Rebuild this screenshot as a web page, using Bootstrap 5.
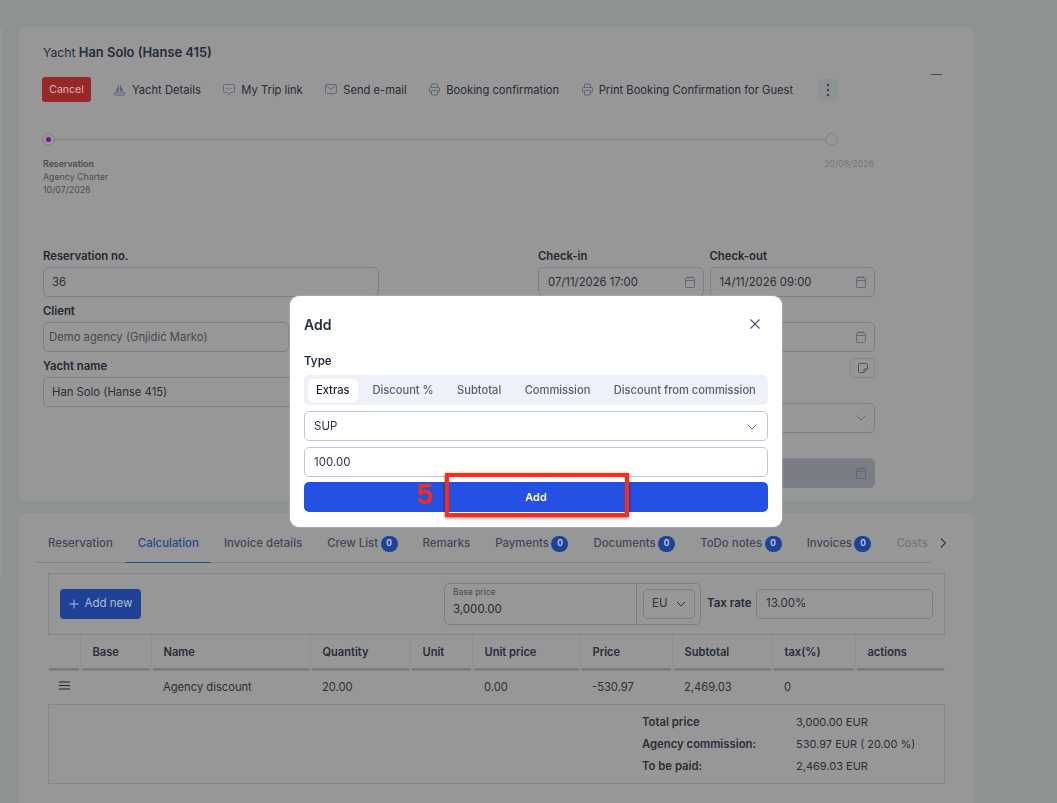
<!DOCTYPE html>
<html lang="en">

<head>
  <meta charset="UTF-8" />
  <meta name="viewport" content="width=device-width, initial-scale=1" />
  <title>Yacht reservation</title>
  <link href="https://cdn.jsdelivr.net/npm/bootstrap@5.3.3/dist/css/bootstrap.min.css" rel="stylesheet">
  <style>
    html, body { height: 803px; overflow: hidden; }
    body { background: #8d9393; font-family: Inter, "Liberation Sans", sans-serif; font-size: 11.3px; color: #232833; }
    svg { display: block; flex: none; }
    .page-wrap { padding: 27px 83px 0 19px; }
    .panel { background: #979797; border-radius: 7px; }
    .panel-top { height: 474px; padding: 18px 24px 0 23px; margin-bottom: 12px; position: relative; }
    .panel-bottom { height: 300px; padding: 0 29px 0 16px; }
    .yacht-title { font-size: 12.2px; line-height: 16px; margin: 0 0 16px 1px; color: #242a36; }
    .yacht-title b { font-weight: 600; font-size: 12.9px; }
    .collapse-bar { position: absolute; top: 47px; right: 32px; width: 11px; height: 1px; background: #3d4a66; }

    .actions { height: 25px; margin-bottom: 31px; }
    .btn-void { background: #982828; color: #d8b8b8; font-size: 10.5px; width: 49px; height: 25px; padding: 0; border: 0; border-radius: 3px; margin-right: 22px; }
    .act-link { font-size: 11.2px; color: #262b37; margin-right: 22.5px; gap: 6px; white-space: nowrap; padding-top: 1px; }
    .act-link svg { color: #5b6577; }
    .kebab { width: 22px; height: 22px; border-radius: 4px; background: #8d9393; margin-left: 1px; }

    .stepper { position: relative; height: 12px; width: 796px; margin-bottom: 12px; }
    .stepper-line { position: absolute; left: 12px; right: 12px; top: 6px; height: 1px; background: #7f8184; }
    .step-dot { position: absolute; top: 0; width: 13px; height: 13px; border-radius: 50%; border: 1px solid #7f8184; background: #979797; }
    .step-dot.on::after { content: ""; position: absolute; left: 3px; top: 3px; width: 5px; height: 5px; border-radius: 50%; background: #7f0a9f; }
    .step-text { font-size: 8.8px; line-height: 13px; color: #4a4d55; height: 92px; margin-left: 1px; }
    .step-text b { font-weight: 600; }
    .step-end { color: #74777c; margin-left: 782px; }

    .fields { gap: 0 159px; margin-left: 1px; }
    .field-col { width: 336px; flex: none; }
    .field-col.wide { width: 337px; }
    .field-label { font-size: 11.3px; font-weight: 600; line-height: 14px; margin-bottom: 4px; color: #232833; height: 14px; }
    .fake-input { height: 30px; border: 1px solid #7c8087; border-radius: 5px; padding: 0 8px; font-size: 11.3px; color: #2a2e38; display: flex; align-items: center; justify-content: space-between; margin-bottom: 7px; }
    .fake-input svg { color: #5b6577; }
    .field-col.wide .fake-input { padding: 0 8px 0 9px; }
    .client-box { width: 246px; color: #44474e; }
    .field-col .client-box { padding-left: 5px; }
    .date-pair { gap: 6px; }
    .date-pair > div { width: 165.5px; }
    .fake-input.locked { background: #7a7d84; margin-bottom: 0; }
    .note-btn { width: 25px; height: 20px; border: 1px solid #83868b; border-radius: 4px; margin: -1px 0 7px auto; color: #4c5465; }

    .tab-row { height: 60px; position: relative; padding-top: 5px; margin-left: .5px; }
    .tab-strip { width: 895px; box-shadow: inset 0 -1px #7e838a; height: 45px; overflow: hidden; flex-wrap: nowrap; }
    .tab-strip a { padding: 7px 12.5px 0; height: 45px; font-size: 11.42px; font-weight: 500; color: #3e4758; text-decoration: none; white-space: nowrap; display: flex; align-items: center; gap: 2.5px; border-bottom: 1px solid transparent; }
    .tab-strip a.active { color: #26468f; border-bottom-color: #26468f; }
    .tab-strip a.faded { color: #72767e; }
    .count-pill { width: 17px; height: 16px; border-radius: 8px; background: #1f4296; color: #ccd4e6; font-size: 8.5px; font-weight: 600; display: inline-flex; align-items: center; justify-content: center; }
    .tab-next { position: absolute; left: 904px; top: 25px; color: #333a48; }

    .tool-box { margin-left: 13px; width: 897px; height: 62px; border: 1px solid #82858a; display: flex; align-items: center; padding: 0 11px; }
    .btn-add-new { background: #1f4296; color: #b0bcd6; border: 0; border-radius: 4px; width: 81px; height: 30px; font-size: 11.5px; padding: 0; gap: 6px; margin-right: 303px; }
    .base-group { width: 257px; height: 42px; border: 1px solid #7c8087; border-radius: 5px; display: flex; margin-right: 6px; }
    .base-price { width: 192px; padding: 2px 8px; border-right: 1px solid #7c8087; }
    .base-price small { display: block; font-size: 8.5px; line-height: 12px; color: #484c55; }
    .base-price span { display: block; margin-top: 3px; font-size: 11.5px; line-height: 17px; color: #262a34; }
    .cur-select { margin: 5px 0 0 6px; width: 52px; height: 30px; border: 1px solid #7c8087; border-radius: 5px; padding: 0 8px; font-size: 11.5px; color: #333; justify-content: space-between; }
    .tax-label { font-size: 11.5px; font-weight: 600; width: 49px; color: #262a34; white-space: nowrap; }
    .tax-input { width: 177px; height: 30px; border: 1px solid #7c8087; border-radius: 5px; padding: 0 9px; font-size: 11.5px; color: #2a2e38; }

    .calc-table { margin-left: 13px; width: 897px; table-layout: fixed; border-collapse: separate; border-spacing: 0; }
    .calc-table th { height: 35px; font-size: 11.1px; font-weight: 600; color: #272c37; padding: 0 0 0 11.5px; border-left: 1px solid #8e9090; position: relative; }
    .calc-table th::after { content: ""; position: absolute; left: 1px; right: 1px; bottom: 0; height: 2px; background: #797b80; box-shadow: 0 1px 1px rgba(0,0,0,.12); }
    .calc-table th:first-child { border-left: 0; }
    .calc-table td { height: 34px; font-size: 11.2px; color: #2a2e38; padding: 0 0 0 12px; }
    .calc-table td svg { margin-left: -1px; margin-top: -4px; color: #222; }
    .sum-box { margin-left: 13px; width: 897px; height: 80px; border: 1px solid #82858a; display: flex; padding: 6px 0 0 593px; }
    .sum-grid { display: grid; grid-template-columns: 154px auto; grid-auto-rows: 22px; align-items: center; font-size: 11px; color: #2a2e38; white-space: nowrap; }
    .sum-grid b { font-weight: 600; font-size: 11.3px; }
    .left-edge { position: fixed; left: 0; top: 28px; width: 2px; height: 549px; background: #979797; border-radius: 0 3px 3px 0; }

    /* modal sobre el contenido */
    .dim-layer { position: fixed; inset: 0; backdrop-filter: blur(.7px); z-index: 10; }
    .add-dialog { position: fixed; left: 290px; top: 296px; width: 492px; height: 231px; background: #fff; border-radius: 9px; z-index: 11; padding: 21px 14px 0; box-shadow: 0 0 2px #c9d0dc; color: #263044; }
    .add-title { font-size: 14px; font-weight: 600; line-height: 16px; margin-bottom: 21px; }
    .close-x { position: absolute; right: 22px; top: 23px; color: #47546b; }
    .type-label { font-size: 11.5px; font-weight: 600; line-height: 14px; margin-bottom: 7px; }
    .type-tabs { background: #eef1f7; border-radius: 5px; height: 30px; padding: 4px; margin-bottom: 6px; gap: 0; }
    .type-tabs a { font-size: 11.15px; font-weight: 500; color: #566075; text-decoration: none; padding: 0 11.7px; line-height: 23px; height: 23px; white-space: nowrap; border-radius: 5px; }
    .type-tabs a.active { background: #fff; color: #1d2433; padding: 0 8px; margin-right: 3.25px; }
    .modal-input { height: 30px; border: 1px solid #bcc7d9; border-radius: 5px; padding: 1px 10px 0 9px; font-size: 11.5px; margin-bottom: 6px; color: #2d3648; }
    .modal-input.last { margin-bottom: 5px; }
    .btn-send { width: 464px; height: 30px; background: #2450e4; border: 0; border-radius: 5px; color: #fff; font-size: 11px; font-weight: 600; padding: 0; display: block; }
    .mark-box { position: absolute; left: 155px; top: 177px; width: 184px; height: 44px; border: 4px solid #ff2a14; box-shadow: 0 1px 3px rgba(0,0,0,.5); }
    .mark-num { position: absolute; left: 127px; top: 185px; font-family: "Liberation Sans", sans-serif; font-weight: 700; font-size: 29px; line-height: 26px; color: #ff2a14; }
  </style>
</head>

<body>
  <div class="left-edge"></div>
  <div class="page-wrap">
    <div class="panel panel-top">
      <div class="yacht-title">Yacht <b>Han Solo (Hanse 415)</b></div>
      <div class="collapse-bar"></div>

      <div class="actions d-flex align-items-center">
        <button class="btn btn-void">Cancel</button>
        <span class="act-link d-flex align-items-center">
          <svg width="13" height="13" viewBox="0 0 13 13" fill="currentColor" stroke="none"><path d="M6 1.500V8.500H2.500z"/><path d="M7 1V8.500H10.500z"/><path d="M1 9.800h11l-1.200 2.400H2.200z" fill="none" stroke="currentColor" stroke-width=".9"/></svg>
          Yacht Details
        </span>
        <span class="act-link d-flex align-items-center">
          <svg width="12" height="13" viewBox="0 0 12 13" fill="none" stroke="currentColor"><path d="M1.500 1.500h9a1 1 0 0 1 1 1v6a1 1 0 0 1-1 1H7.500L6 11.500 4.500 9.500h-3a1 1 0 0 1-1-1v-6a1 1 0 0 1 1-1z" stroke-width=".9"/><path d="M3 5.500h1M5.500 4.500v2M8 5.500h1" stroke-width=".9"/></svg>
          My Trip link
        </span>
        <span class="act-link d-flex align-items-center">
          <svg width="12" height="13" viewBox="0 0 12 13" fill="none" stroke="currentColor"><rect x=".5" y="1.500" width="11" height="9" rx="1" stroke-width=".9"/><path d="M1 2.500l5 4 5-4" stroke-width=".9"/></svg>
          Send e-mail
        </span>
        <span class="act-link d-flex align-items-center">
          <svg width="11" height="13" viewBox="0 0 11 13" fill="none" stroke="currentColor" stroke-width="1"><path d="M2.500 4.500V2a1 1 0 0 1 1-1h4a1 1 0 0 1 1 1v2.500"/><rect x=".5" y="4.500" width="10" height="4.500" rx="1"/><rect x="2.500" y="7.500" width="6" height="4.500" rx=".8" fill="#979797"/></svg>
          Booking confirmation
        </span>
        <span class="act-link d-flex align-items-center">
          <svg width="11" height="13" viewBox="0 0 11 13" fill="none" stroke="currentColor" stroke-width="1"><path d="M2.500 4.500V2a1 1 0 0 1 1-1h4a1 1 0 0 1 1 1v2.500"/><rect x=".5" y="4.500" width="10" height="4.500" rx="1"/><rect x="2.500" y="7.500" width="6" height="4.500" rx=".8" fill="#979797"/></svg>
          Print Booking Confirmation for Guest
        </span>
        <span class="kebab d-flex align-items-center justify-content-center">
          <svg width="4" height="14" viewBox="0 0 4 14" fill="#3a3f4a"><circle cx="2" cy="2" r="1.200"/><circle cx="2" cy="7" r="1.200"/><circle cx="2" cy="12" r="1.200"/></svg>
        </span>
      </div>

      <div class="stepper">
        <div class="stepper-line"></div>
        <div class="step-dot on" style="left: 0"></div>
        <div class="step-dot" style="left: 783px"></div>
      </div>
      <div class="d-flex">
        <div class="step-text"><b>Reservation</b><br>Agency Charter<br>10/07/2026</div>
        <div class="step-text step-end position-absolute">20/08/2026</div>
      </div>

      <div class="d-flex fields">
        <div class="field-col">
          <div class="field-label">Reservation no.</div>
          <div class="fake-input">36</div>
          <div class="field-label">Client</div>
          <div class="fake-input client-box">Demo agency (Gnjidić Marko)</div>
          <div class="field-label">Yacht name</div>
          <div class="fake-input">Han Solo (Hanse 415)</div>
        </div>
        <div class="field-col wide">
          <div class="d-flex date-pair">
            <div>
              <div class="field-label">Check-in</div>
              <div class="fake-input">07/11/2026 17:00
                <svg width="10" height="12" viewBox="0 0 10 12" fill="none" stroke="currentColor" stroke-width=".9"><rect x=".5" y="1.500" width="9" height="10" rx="1"/><path d="M.5 4.500h9M3 0v2.500M7 0v2.500"/></svg>
              </div>
            </div>
            <div>
              <div class="field-label">Check-out</div>
              <div class="fake-input">14/11/2026 09:00
                <svg width="10" height="12" viewBox="0 0 10 12" fill="none" stroke="currentColor" stroke-width=".9"><rect x=".5" y="1.500" width="9" height="10" rx="1"/><path d="M.5 4.500h9M3 0v2.500M7 0v2.500"/></svg>
              </div>
            </div>
          </div>
          <div class="field-label"></div>
          <div class="fake-input justify-content-end">
            <svg width="10" height="12" viewBox="0 0 10 12" fill="none" stroke="currentColor" stroke-width=".9"><rect x=".5" y="1.500" width="9" height="10" rx="1"/><path d="M.5 4.500h9M3 0v2.500M7 0v2.500"/></svg>
          </div>
          <div class="note-btn d-flex align-items-center justify-content-center">
            <svg width="10" height="10" viewBox="0 0 10 10" fill="none" stroke="currentColor"><path d="M9.500 6V1.500a1 1 0 0 0-1-1h-7a1 1 0 0 0-1 1v7a1 1 0 0 0 1 1H6z"/><path d="M6 9.500V6h3.500"/></svg>
          </div>
          <div class="field-label"></div>
          <div class="fake-input justify-content-end">
            <svg width="10" height="6" viewBox="0 0 10 6" fill="none" stroke="currentColor"><path d="M.5.500l4.500 4.500 4.500-4.500"/></svg>
          </div>
          <div class="field-label"></div>
          <div class="fake-input locked justify-content-end">
            <svg width="10" height="12" viewBox="0 0 10 12" fill="none" stroke="currentColor" stroke-width=".9"><rect x=".5" y="1.500" width="9" height="10" rx="1"/><path d="M.5 4.500h9M3 0v2.500M7 0v2.500"/></svg>
          </div>
        </div>
      </div>
    </div>

    <div class="panel panel-bottom">
      <div class="tab-row">
        <div class="tab-strip d-flex">
          <a href="#">Reservation</a>
          <a href="#" class="active">Calculation</a>
          <a href="#">Invoice details</a>
          <a href="#">Crew List <span class="count-pill">0</span></a>
          <a href="#">Remarks</a>
          <a href="#">Payments <span class="count-pill">0</span></a>
          <a href="#">Documents <span class="count-pill">0</span></a>
          <a href="#">ToDo notes <span class="count-pill">0</span></a>
          <a href="#">Invoices <span class="count-pill">0</span></a>
          <a href="#" class="faded">Costs</a>
        </div>
        <svg class="tab-next" width="6" height="10" viewBox="0 0 6 10" fill="none" stroke="currentColor" stroke-width="1.100"><path d="M1 .5l4.500 4.500L1 9.500"/></svg>
      </div>

      <div class="tool-box">
        <button class="btn btn-add-new d-flex align-items-center justify-content-center">
          <svg width="10" height="10" viewBox="0 0 10 10" fill="none" stroke="currentColor"><path d="M5 .5v9M.5 5h9"/></svg>
          Add new
        </button>
        <div class="base-group">
          <div class="base-price"><small>Base price</small><span>3,000.00</span></div>
          <div class="cur-select d-flex align-items-center">EU
            <svg width="10" height="6" viewBox="0 0 10 6" fill="none" stroke="currentColor"><path d="M1 1l4 4 4-4"/></svg>
          </div>
        </div>
        <div class="tax-label">Tax rate</div>
        <div class="tax-input d-flex align-items-center">13.00%</div>
      </div>

      <table class="calc-table">
        <colgroup>
          <col style="width: 32px"><col style="width: 71px"><col style="width: 159px"><col style="width: 100px"><col style="width: 62px"><col style="width: 108px"><col style="width: 92px"><col style="width: 100px"><col style="width: 83px"><col style="width: 90px">
        </colgroup>
        <thead>
          <tr><th></th><th>Base</th><th>Name</th><th>Quantity</th><th>Unit</th><th>Unit price</th><th>Price</th><th>Subtotal</th><th>tax(%)</th><th>actions</th></tr>
        </thead>
        <tbody>
          <tr>
            <td><svg width="11" height="9" viewBox="0 0 11 9" fill="none" stroke="currentColor"><path d="M0 1h11M0 4.500h11M0 8h11"/></svg></td>
            <td></td><td>Agency discount</td><td>20.00</td><td></td><td>0.00</td><td>-530.97</td><td>2,469.03</td><td>0</td><td></td>
          </tr>
        </tbody>
      </table>

      <div class="sum-box">
        <div class="sum-grid">
          <b>Total price</b><span>3,000.00 EUR</span>
          <b>Agency commission:</b><span>530.97 EUR ( 20.00 %)</span>
          <b>To be paid:</b><span>2,469.03 EUR</span>
        </div>
      </div>
    </div>
  </div>

  <div class="dim-layer"></div>
  <div class="add-dialog">
    <div class="add-title">Add</div>
    <svg class="close-x" width="10" height="10" viewBox="0 0 10 10" fill="none" stroke="currentColor" stroke-width="1.100"><path d="M.5.5l9 9M9.500.5l-9 9"/></svg>
    <div class="type-label">Type</div>
    <div class="type-tabs d-flex align-items-center">
      <a href="#" class="active">Extras</a>
      <a href="#">Discount %</a>
      <a href="#">Subtotal</a>
      <a href="#">Commission</a>
      <a href="#">Discount from commission</a>
    </div>
    <div class="modal-input d-flex align-items-center justify-content-between">SUP
      <svg width="10" height="6" viewBox="0 0 10 6" fill="none" stroke="#5d6a80"><path d="M.5.5l4.500 4.500 4.500-4.500"/></svg>
    </div>
    <div class="modal-input last d-flex align-items-center">100.00</div>
    <button class="btn-send">Add</button>
    <div class="mark-box"></div>
    <div class="mark-num">5</div>
  </div>

  <script src="https://cdn.jsdelivr.net/npm/bootstrap@5.3.3/dist/js/bootstrap.bundle.min.js"></script>
</body>

</html>
